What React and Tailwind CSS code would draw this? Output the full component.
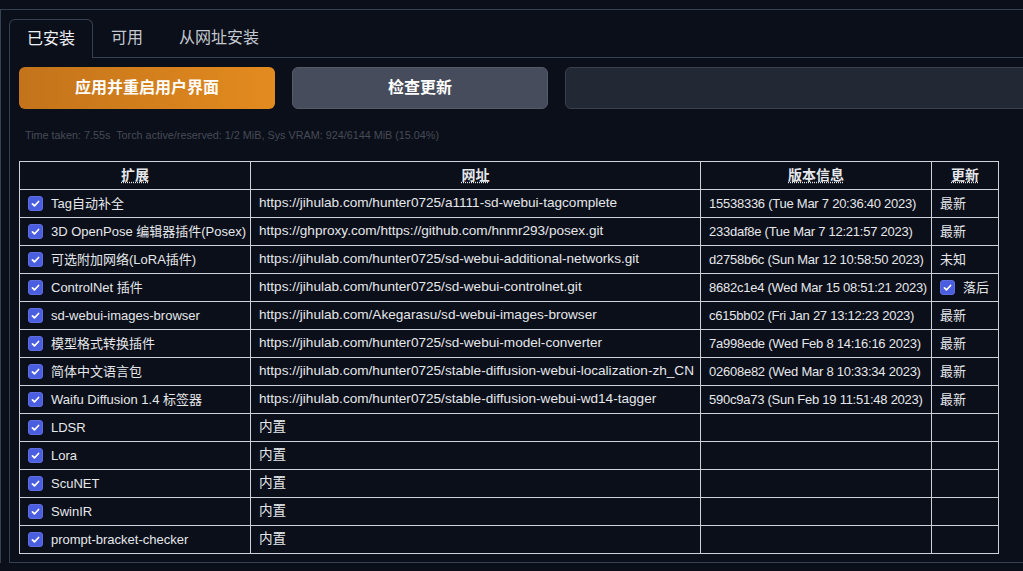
import React from 'react';

const rows = [
  { name: 'Tag自动补全', url: 'https://jihulab.com/hunter0725/a1111-sd-webui-tagcomplete', ver: '15538336 (Tue Mar 7 20:36:40 2023)', upd: '最新' },
  { name: '3D OpenPose 编辑器插件(Posex)', url: 'https://ghproxy.com/https://github.com/hnmr293/posex.git', ver: '233daf8e (Tue Mar 7 12:21:57 2023)', upd: '最新' },
  { name: '可选附加网络(LoRA插件)', url: 'https://jihulab.com/hunter0725/sd-webui-additional-networks.git', ver: 'd2758b6c (Sun Mar 12 10:58:50 2023)', upd: '未知' },
  { name: 'ControlNet 插件', url: 'https://jihulab.com/hunter0725/sd-webui-controlnet.git', ver: '8682c1e4 (Wed Mar 15 08:51:21 2023)', upd: '落后', behind: true },
  { name: 'sd-webui-images-browser', url: 'https://jihulab.com/Akegarasu/sd-webui-images-browser', ver: 'c615bb02 (Fri Jan 27 13:12:23 2023)', upd: '最新' },
  { name: '模型格式转换插件', url: 'https://jihulab.com/hunter0725/sd-webui-model-converter', ver: '7a998ede (Wed Feb 8 14:16:16 2023)', upd: '最新' },
  { name: '简体中文语言包', url: 'https://jihulab.com/hunter0725/stable-diffusion-webui-localization-zh_CN', ver: '02608e82 (Wed Mar 8 10:33:34 2023)', upd: '最新' },
  { name: 'Waifu Diffusion 1.4 标签器', url: 'https://jihulab.com/hunter0725/stable-diffusion-webui-wd14-tagger', ver: '590c9a73 (Sun Feb 19 11:51:48 2023)', upd: '最新' },
  { name: 'LDSR', url: '内置', ver: '', upd: '' },
  { name: 'Lora', url: '内置', ver: '', upd: '' },
  { name: 'ScuNET', url: '内置', ver: '', upd: '' },
  { name: 'SwinIR', url: '内置', ver: '', upd: '' },
  { name: 'prompt-bracket-checker', url: '内置', ver: '', upd: '' },
];

const Check = () => (
  <span className="inline-flex w-[15px] h-[15px] shrink-0 items-center justify-center rounded-[3px] bg-[#4b5ee0] border border-[#5d6ee0]">
    <svg viewBox="0 0 16 16" className="w-[11px] h-[11px]" fill="none" stroke="white" strokeWidth="2.4" strokeLinecap="round" strokeLinejoin="round">
      <path d="M3.5 8.5l3 3 6-6.5" />
    </svg>
  </span>
);

const cell = 'border border-[#cfd2d8] h-[28px] px-[8px] py-0 whitespace-nowrap overflow-hidden';

export default function App() {
  return (
    <div
      className="bg-[#0b0f19] h-[571px] w-[1023px] overflow-hidden text-[#e5e7eb]"
      style={{ fontFamily: '"Liberation Sans", "Noto Sans CJK SC", sans-serif' }}
    >
      <div className="pt-[9px]">
        <div className="border-t border-l border-[#374151] pl-[8px] pt-[9px] w-[1100px]">
          {/* tabs */}
          <div className="flex items-end h-[38px]">
            <div className="h-[39px] -mb-px flex items-center px-[17px] border border-b-0 border-[#374151] rounded-t-[6px] bg-[#0b0f19] text-[16px] text-[#eef0f4] relative z-10">
              已安装
            </div>
            <div className="h-[39px] flex items-center px-[17px] border border-transparent text-[16px] text-[#c4c8d0]">可用</div>
            <div className="h-[39px] flex items-center px-[17px] border border-transparent text-[16px] text-[#c4c8d0]">从网址安装</div>
          </div>
          <div className="border-t border-l border-b border-[#374151] pl-[9px] pt-[9px] pb-[8px]">
            <div className="flex gap-[17px]">
              <button className="w-[256px] shrink-0 h-[42px] rounded-[6px] bg-gradient-to-r from-[#c3731a] to-[#e38b1f] text-white font-bold text-[16px]">
                应用并重启用户界面
              </button>
              <button className="w-[256px] shrink-0 h-[42px] rounded-[6px] bg-[#464c5b] border border-[#555b69] text-white font-bold text-[16px]">
                检查更新
              </button>
              <div className="w-[600px] shrink-0 h-[42px] rounded-[6px] bg-[#232835] border border-[#3b404d]" />
            </div>
            <div className="mt-[18px] h-[16px] pl-[6px] text-[10.8px] leading-[16px] text-[#464b57] whitespace-pre">
              Time taken: 7.55s  Torch active/reserved: 1/2 MiB, Sys VRAM: 924/6144 MiB (15.04%)
            </div>
            <table className="mt-[18px] border-collapse table-fixed w-[979px] text-[13px]">
              <colgroup>
                <col className="w-[231px]" />
                <col className="w-[450px]" />
                <col className="w-[231px]" />
                <col className="w-[67px]" />
              </colgroup>
              <thead>
                <tr>
                  {['扩展', '网址', '版本信息', '更新'].map((h) => (
                    <th key={h} className={`${cell} text-center font-bold text-[14px]`}>
                      <span className="underline decoration-dotted underline-offset-2">{h}</span>
                    </th>
                  ))}
                </tr>
              </thead>
              <tbody>
                {rows.map((r) => (
                  <tr key={r.name}>
                    <td className={cell}>
                      <div className="flex items-center gap-[8px]">
                        <Check />
                        <span>{r.name}</span>
                      </div>
                    </td>
                    <td className={`${cell} text-[13.6px]`}>{r.url}</td>
                    <td className={`${cell} tracking-[-0.25px]`}>{r.ver}</td>
                    <td className={cell}>
                      {r.behind ? (
                        <div className="flex items-center gap-[8px]">
                          <Check />
                          <span>{r.upd}</span>
                        </div>
                      ) : (
                        r.upd
                      )}
                    </td>
                  </tr>
                ))}
              </tbody>
            </table>
          </div>
        </div>
      </div>
    </div>
  );
}
